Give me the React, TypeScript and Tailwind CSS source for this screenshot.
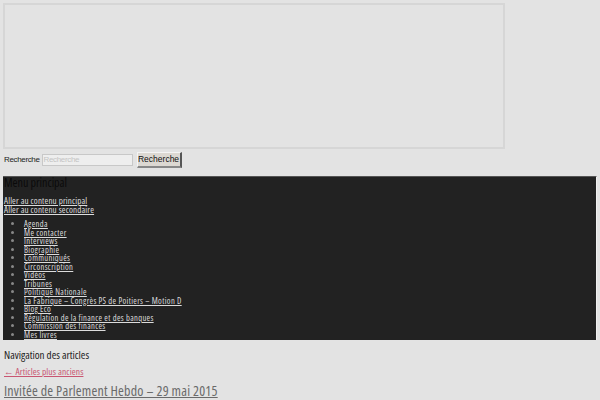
import React from "react";

const items = [
  "Agenda",
  "Me contacter",
  "Interviews",
  "Biographie",
  "Communiqués",
  "Circonscription",
  "Vidéos",
  "Tribunes",
  "Politique Nationale",
  "La Fabrique – Congrès PS de Poitiers – Motion D",
  "Blog Eco",
  "Régulation de la finance et des banques",
  "Commission des finances",
  "Mes livres",
];

export default function App() {
  return (
    <div className="w-[600px] h-[400px] overflow-hidden bg-[#e3e3e3] font-['Open_Sans',sans-serif] font-stretch-condensed">
      <div className="pt-[3px] pl-[3px]">
        <div className="w-[502px] h-[146px] border-2 border-[#d6d6d6]" />
      </div>
      <div className="flex items-center h-[17px] mt-[2px] pl-[4px] font-['Liberation_Sans',sans-serif] font-stretch-normal text-[8px] text-[#222] tracking-[-0.35px]">
        <span>Recherche</span>
        <div className="ml-[2px] w-[91px] h-[12px] border border-[#c8c8c8] bg-[#eeeeee] flex items-center pl-[1px] text-[#c4c4c4]">Recherche</div>
        <div className="ml-[4px] w-[45px] h-[16px] bg-[#dcd8d2] border-t border-l border-[#f4f4f4] border-r-2 border-b-2 border-r-[#555] border-b-[#888] flex items-center justify-center text-[8.5px] text-[#111] tracking-[0px]">Recherche</div>
      </div>
      <div className="ml-[3px] mt-[8px] w-[594px] h-[164px] overflow-hidden bg-[#222222] border-t border-[#555] border-r border-r-[#f0f0f0]">
        <div className="pl-[1px] text-[12px] leading-[12px] text-[#0a0a0a]">Menu principal</div>
        <div className="mt-[7px] pl-[1px] text-[9px] leading-[9px] text-[#dcdcdc] tracking-[0.15px]">
          <div><a className="underline">Aller au contenu principal</a></div>
          <div><a className="underline">Aller au contenu secondaire</a></div>
        </div>
        <ul className="mt-[6px] pl-[21px] list-disc text-[8.5px] leading-[8.5px] text-[#dcdcdc] tracking-[0.35px] marker:text-[#888]">
          {items.map((t) => (
            <li key={t}>
              <a className="underline">{t}</a>
            </li>
          ))}
        </ul>
      </div>
      <div className="pl-[4px] mt-[9px] text-[11px] leading-[12px] text-[#222]">Navigation des articles</div>
      <div className="pl-[4px] mt-[6px] text-[9.5px] leading-[10px] text-[#c95672] tracking-[0.1px]">
        <a className="underline">← Articles plus anciens</a>
      </div>
      <div className="pl-[4px] mt-[5px] text-[14px] leading-[17px] text-[#6a6a6a] tracking-[0.2px]">
        <a className="underline">Invitée de Parlement Hebdo – 29 mai 2015</a>
      </div>
    </div>
  );
}
